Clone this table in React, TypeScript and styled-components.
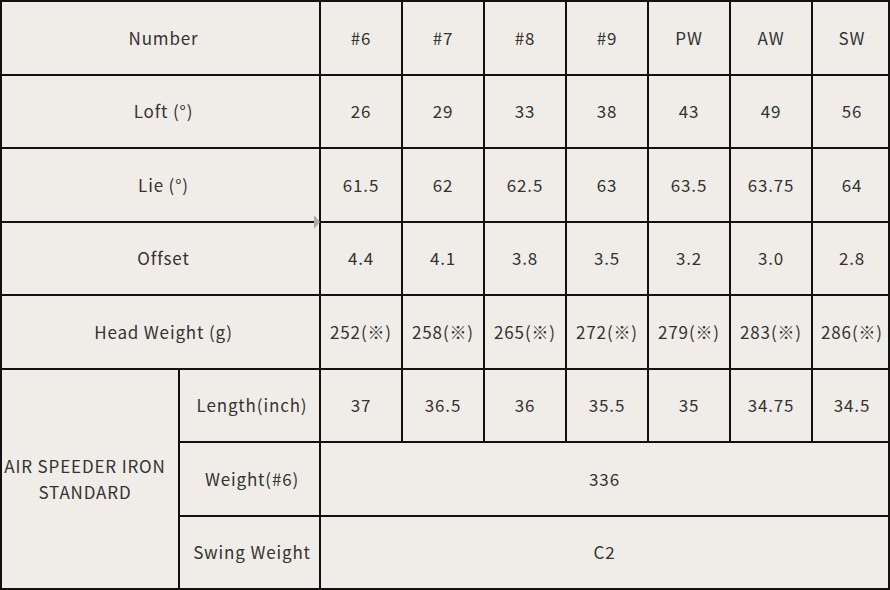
import React from "react";
import styled, { createGlobalStyle } from "styled-components";

const Global = createGlobalStyle`
  html, body { margin: 0; padding: 0; background: #f0ede8; }
  body { font-family: "Noto Sans CJK JP", "Noto Sans", sans-serif; }
`;

const Wrap = styled.div`
  position: relative;
  width: 890px;
  height: 590px;
`;

const Grid = styled.div`
  box-sizing: border-box;
  width: 890px;
  height: 590px;
  padding: 2px;
  background: #111;
  display: grid;
  grid-template-columns: 176px 139px repeat(6, 80px) 1fr;
  grid-template-rows: repeat(8, 1fr);
  gap: 2px;
`;

const Cell = styled.div<{ $col?: string; $row?: string; $padL?: number; $padR?: number }>`
  background: #f0ede8;
  color: #333;
  font-size: 17px;
  letter-spacing: 0.05em;
  line-height: 26px;
  display: flex;
  align-items: center;
  justify-content: center;
  text-align: center;
  padding-left: ${(p) => p.$padL ?? 0}px;
  padding-right: ${(p) => p.$padR ?? 0}px;
  ${(p) => (p.$col ? `grid-column: ${p.$col};` : "")}
  ${(p) => (p.$row ? `grid-row: ${p.$row};` : "")}
`;

const Pointer = styled.div`
  position: absolute;
  left: 314px;
  top: 215px;
  width: 0;
  height: 0;
  border-top: 7px solid transparent;
  border-bottom: 7px solid transparent;
  border-left: 6px solid #aeaba6;
`;

const rows: { label: string; values: string[] }[] = [
  { label: "Number", values: ["#6", "#7", "#8", "#9", "PW", "AW", "SW"] },
  { label: "Loft (°)", values: ["26", "29", "33", "38", "43", "49", "56"] },
  { label: "Lie (°)", values: ["61.5", "62", "62.5", "63", "63.5", "63.75", "64"] },
  { label: "Offset", values: ["4.4", "4.1", "3.8", "3.5", "3.2", "3.0", "2.8"] },
  {
    label: "Head Weight (g)",
    values: ["252(※)", "258(※)", "265(※)", "272(※)", "279(※)", "283(※)", "286(※)"],
  },
];

const lengths = ["37", "36.5", "36", "35.5", "35", "34.75", "34.5"];

export default function App() {
  return (
    <Wrap>
      <Global />
      <Grid>
        {rows.map((r) => (
          <React.Fragment key={r.label}>
            <Cell $col="1 / 3" $padL={6}>
              {r.label}
            </Cell>
            {r.values.map((v, i) => (
              <Cell key={i} $padL={i === 6 ? 3 : 0}>
                {v}
              </Cell>
            ))}
          </React.Fragment>
        ))}
        <Cell $col="1" $row="6 / 9" $padR={10}>
          AIR SPEEDER IRON
          <br />
          STANDARD
        </Cell>
        <Cell $col="2" $row="6" $padL={5}>
          Length(inch)
        </Cell>
        {lengths.map((v, i) => (
          <Cell key={i} $row="6" $padL={i === 6 ? 3 : 0}>
            {v}
          </Cell>
        ))}
        <Cell $col="2" $row="7" $padL={5}>
          Weight(#6)
        </Cell>
        <Cell $col="3 / 10" $row="7">
          336
        </Cell>
        <Cell $col="2" $row="8" $padL={5}>
          Swing Weight
        </Cell>
        <Cell $col="3 / 10" $row="8">
          C2
        </Cell>
      </Grid>
      <Pointer />
    </Wrap>
  );
}
